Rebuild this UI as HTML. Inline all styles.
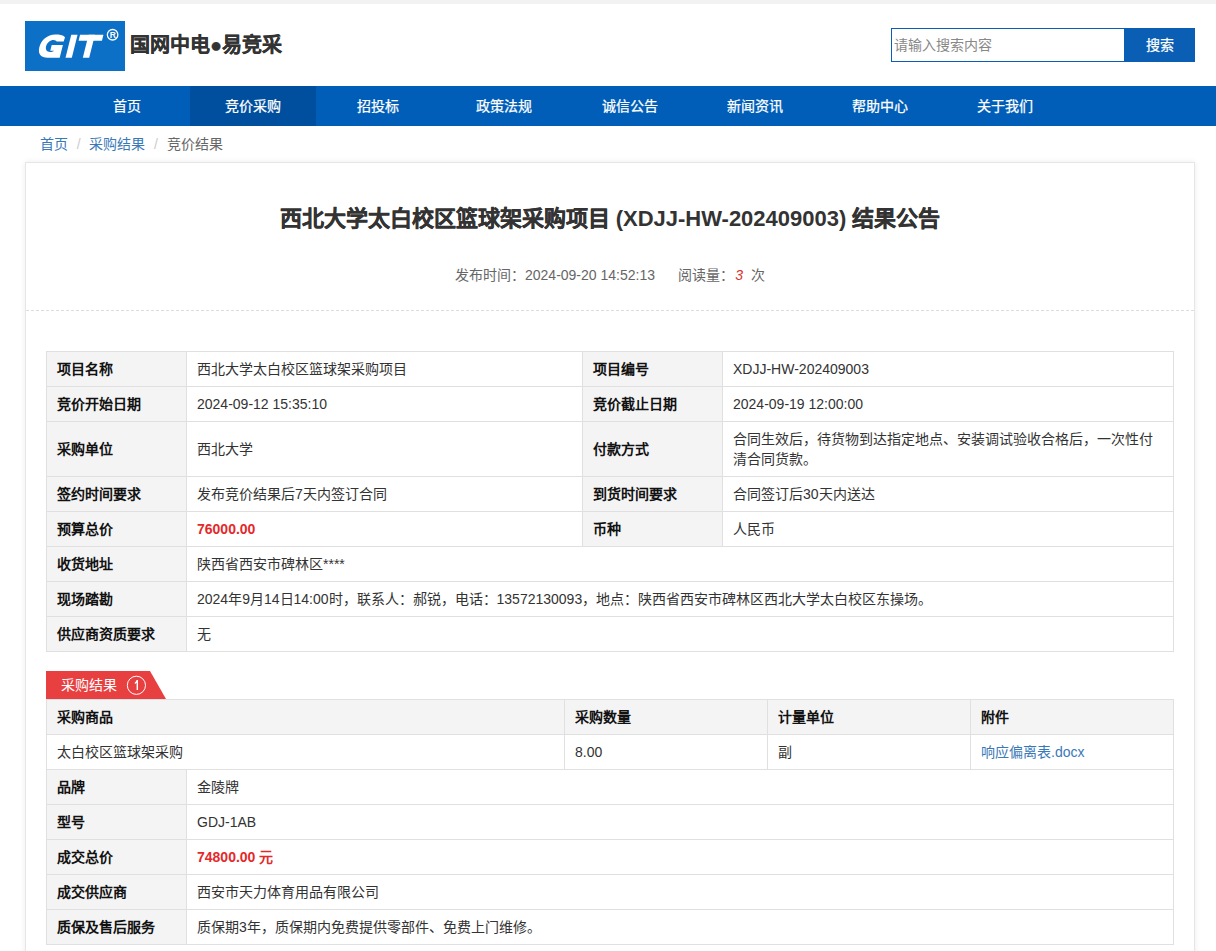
<!DOCTYPE html>
<html lang="zh-CN"><head><meta charset="utf-8">
<style>
*{margin:0;padding:0;box-sizing:border-box}
html,body{width:1216px;height:951px;overflow:hidden;background:#fff;font-family:"Liberation Sans",sans-serif;font-size:14px;color:#333}
.topbar{height:4px;background:#f2f2f2}
.header{position:relative;height:82px}
.logo{position:absolute;left:25px;top:17px;width:100px;height:50px}
.brand{position:absolute;left:130px;top:26px;font-size:20px;font-weight:bold;color:#333;line-height:30px;-webkit-text-stroke:0.3px #333}
.search{position:absolute;left:891px;top:24px;width:234px;height:34px;border:1px solid #0a5fb4;color:#888;font-size:14px;line-height:32px;padding-left:2px}
.sbtn{position:absolute;left:1125px;top:24px;width:70px;height:34px;background:#0a5fb4;color:#fff;text-align:center;line-height:34px;font-size:14px;-webkit-text-stroke:0.25px #fff}
.nav{position:absolute;left:0;top:86px;width:1216px;height:40px;background:#005eb8}
.nav div{position:absolute;top:0;height:40px;line-height:40px;width:126px;text-align:center;color:#fff;font-size:14px;-webkit-text-stroke:0.25px #fff}
.nav .act{background:#004f9e}
.crumb{position:absolute;left:40px;top:134px;line-height:20px;font-size:14px;color:#666}
.crumb a{color:#3a79b8;text-decoration:none}
.crumb span.sep{color:#ccc;padding:0 8.7px}
.card{position:absolute;left:25px;top:162px;width:1170px;height:900px;border:1px solid #e6e6e6;box-shadow:0 0 6px rgba(0,0,0,.08);background:#fff}
.title{position:absolute;left:0;top:41px;width:1168px;text-align:center;font-size:22px;font-weight:bold;color:#333;line-height:30px}
.title b{font-weight:bold;-webkit-text-stroke:0.35px #333}
.meta{position:absolute;left:0;top:102px;width:1168px;text-align:center;font-size:14px;color:#666;line-height:20px}
.meta i{color:#d9302c;margin-left:1px;margin-right:4px}
.dash{position:absolute;left:0;top:147px;width:1168px;border-top:1px dashed #ddd}
table{border-collapse:collapse;table-layout:fixed}
td,th{border:1px solid #e0e0e0;font-size:14px;height:35px;padding:0 10px;text-align:left;vertical-align:middle;line-height:20px}
td.l{background:#f4f4f4;font-weight:bold;color:#111}
.t1{position:absolute;left:20px;top:188px;width:1127px}
.red{color:#e4292b;font-weight:bold}
.tab{position:absolute;left:20px;top:508px;height:28px;width:120px}
.t2{position:absolute;left:20px;top:536px;width:1127px}
.t2 th{background:#f4f4f4;font-weight:bold;color:#111}
.lnk{color:#3a79b8}
</style></head><body>
<div class="topbar"></div>
<div class="header">
  <svg class="logo" width="100" height="50" viewBox="0 0 100 50">
<rect width="100" height="50" fill="#0b70c6"/>
<g transform="translate(-25,36.8) skewX(-14)" fill="#fff">
  <path d="M59.6,-16.4 L59.9,-20.5 C57.5,-22.8 53.5,-23.2 49.5,-23.2 C41.5,-23.2 36.7,-17.5 36.7,-10.5 C36.7,-3.8 41,0 47.5,0 L59.7,0 L59.7,-12.9 L48.5,-12.9 L48.5,-7 L52.5,-7 C51.5,-6 50,-5.8 48.8,-5.8 C45,-5.8 43.2,-8.5 43.2,-11.5 C43.2,-15.2 46,-17.8 49,-17.8 C50.8,-17.8 52,-17 52.6,-16.4 Z"/>
  <rect x="65.5" y="-23" width="6.3" height="23"/>
  <rect x="74.3" y="-23" width="23.4" height="5.9"/>
  <rect x="82.8" y="-23" width="6.4" height="23"/>
</g>
<circle cx="87.6" cy="13.75" r="5.25" fill="none" stroke="#fff" stroke-width="1.3"/>
<text x="87.7" y="17" fill="#fff" font-family="Liberation Sans" font-weight="bold" font-size="8.5" text-anchor="middle">R</text>
</svg>
  <div class="brand">国网中电●易竞采</div>
  <div class="search">请输入搜索内容</div>
  <div class="sbtn">搜索</div>
</div>
<div class="nav">
  <div style="left:64px">首页</div>
  <div class="act" style="left:190px">竞价采购</div>
  <div style="left:315px">招投标</div>
  <div style="left:441px">政策法规</div>
  <div style="left:567px">诚信公告</div>
  <div style="left:692px">新闻资讯</div>
  <div style="left:817px">帮助中心</div>
  <div style="left:942px">关于我们</div>
</div>
<div class="crumb"><a>首页</a><span class="sep">/</span><a>采购结果</a><span class="sep">/</span>竞价结果</div>
<div class="card">
  <div class="title"><b>西北大学太白校区篮球架采购项目</b> (XDJJ-HW-202409003) <b>结果公告</b></div>
  <div class="meta">发布时间：2024-09-20 14:52:13 &nbsp;&nbsp;&nbsp;&nbsp; 阅读量：<i>3</i> 次</div>
  <div class="dash"></div>
  <table class="t1">
    <colgroup><col style="width:140px"><col style="width:396px"><col style="width:140px"><col style="width:451px"></colgroup>
    <tr><td class="l">项目名称</td><td>西北大学太白校区篮球架采购项目</td><td class="l">项目编号</td><td>XDJJ-HW-202409003</td></tr>
    <tr><td class="l">竞价开始日期</td><td>2024-09-12 15:35:10</td><td class="l">竞价截止日期</td><td>2024-09-19 12:00:00</td></tr>
    <tr><td class="l" style="height:55px">采购单位</td><td>西北大学</td><td class="l">付款方式</td><td>合同生效后，待货物到达指定地点、安装调试验收合格后，一次性付清合同货款。</td></tr>
    <tr><td class="l">签约时间要求</td><td>发布竞价结果后7天内签订合同</td><td class="l">到货时间要求</td><td>合同签订后30天内送达</td></tr>
    <tr><td class="l">预算总价</td><td class="red">76000.00</td><td class="l">币种</td><td>人民币</td></tr>
    <tr><td class="l">收货地址</td><td colspan="3">陕西省西安市碑林区****</td></tr>
    <tr><td class="l">现场踏勘</td><td colspan="3">2024年9月14日14:00时，联系人：郝锐，电话：13572130093，地点：陕西省西安市碑林区西北大学太白校区东操场。</td></tr>
    <tr><td class="l">供应商资质要求</td><td colspan="3">无</td></tr>
  </table>
  <svg class="tab" viewBox="0 0 120 28" width="120" height="28"><polygon points="0,0 104,0 120,28 0,28" fill="#e84040"/><text x="14.8" y="19.3" fill="#fff" font-size="14" font-family="Liberation Sans">采购结果</text><circle cx="90.4" cy="14.3" r="9.1" fill="none" stroke="#fff" stroke-width="1"/><path d="M90.6,9.1 L92.0,9.1 L92.0,19 L90.6,19 L90.6,11.8 C90.1,12.3 89.5,12.6 88.8,12.9 L88.8,11.6 C89.7,11.1 90.3,10.2 90.6,9.1 Z" fill="#fff"/></svg>
  <table class="t2">
    <colgroup><col style="width:140px"><col style="width:378px"><col style="width:203px"><col style="width:203px"><col style="width:203px"></colgroup>
    <tr><th colspan="2">采购商品</th><th>采购数量</th><th>计量单位</th><th>附件</th></tr>
    <tr><td colspan="2">太白校区篮球架采购</td><td>8.00</td><td>副</td><td class="lnk">响应偏离表.docx</td></tr>
    <tr><td class="l">品牌</td><td colspan="4">金陵牌</td></tr>
    <tr><td class="l">型号</td><td colspan="4">GDJ-1AB</td></tr>
    <tr><td class="l">成交总价</td><td colspan="4" class="red">74800.00 元</td></tr>
    <tr><td class="l">成交供应商</td><td colspan="4">西安市天力体育用品有限公司</td></tr>
    <tr><td class="l">质保及售后服务</td><td colspan="4">质保期3年，质保期内免费提供零部件、免费上门维修。</td></tr>
  </table>
</div>
</body></html>
